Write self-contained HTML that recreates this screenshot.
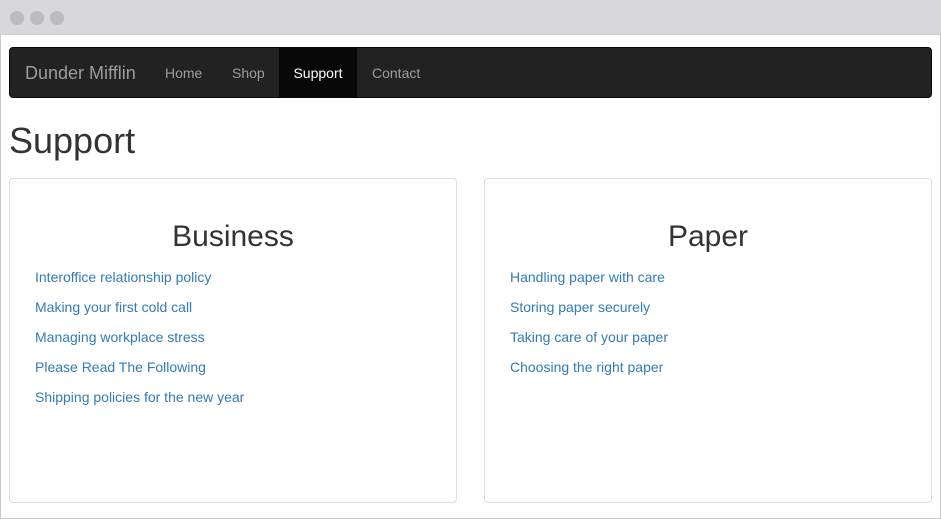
<!DOCTYPE html><html><head><style>
*{box-sizing:border-box;margin:0;padding:0}
body{width:941px;height:519px;background:#fff;font-family:"Liberation Sans",Arial,sans-serif;overflow:hidden;position:relative}
.frame{position:absolute;left:0;top:0;width:941px;height:519px;border:1px solid #c9c8cc;border-top:none}
.bar{position:absolute;left:0;top:0;width:941px;height:35px;background:#d8d7da;border-bottom:1px solid #cfced2}
.dot{position:absolute;top:11px;width:14px;height:14px;border-radius:50%;background:#bcbbc0}
.nav{position:absolute;left:9px;top:47px;width:923px;height:51px;background:#222;border:1px solid #080808;border-radius:4px}
.nav span{position:absolute;top:0;line-height:50px;color:#9d9d9d;font-size:14px}
.brand{font-size:18px!important}
.act{background:#080808;color:#fff!important;text-align:center}
h1{position:absolute;left:9px;top:120px;font-size:36px;font-weight:normal;color:#333}
.p{position:absolute;top:178px;width:448px;height:325px;border:1px solid #ddd;border-radius:4px;padding:0 25px}
.p h2{font-size:30px;font-weight:normal;color:#333;text-align:center;margin-top:40px;line-height:36px;margin-bottom:7px}
.p a{display:block;color:#337ab7;font-size:14px;line-height:30px;text-decoration:none}
</style></head><body>
<div class="frame"></div>
<div class="bar"><div class="dot" style="left:10px"></div><div class="dot" style="left:30px"></div><div class="dot" style="left:50px"></div></div>
<div class="nav">
<span class="brand" style="left:15px">Dunder Mifflin</span>
<span style="left:155px">Home</span>
<span style="left:222px">Shop</span>
<span class="act" style="left:269px;width:78px">Support</span>
<span style="left:362px">Contact</span>
</div>
<h1>Support</h1>
<div class="p" style="left:9px"><h2>Business</h2>
<a>Interoffice relationship policy</a><a>Making your first cold call</a><a>Managing workplace stress</a><a>Please Read The Following</a><a>Shipping policies for the new year</a></div>
<div class="p" style="left:484px"><h2>Paper</h2>
<a>Handling paper with care</a><a>Storing paper securely</a><a>Taking care of your paper</a><a>Choosing the right paper</a></div>
</body></html>
